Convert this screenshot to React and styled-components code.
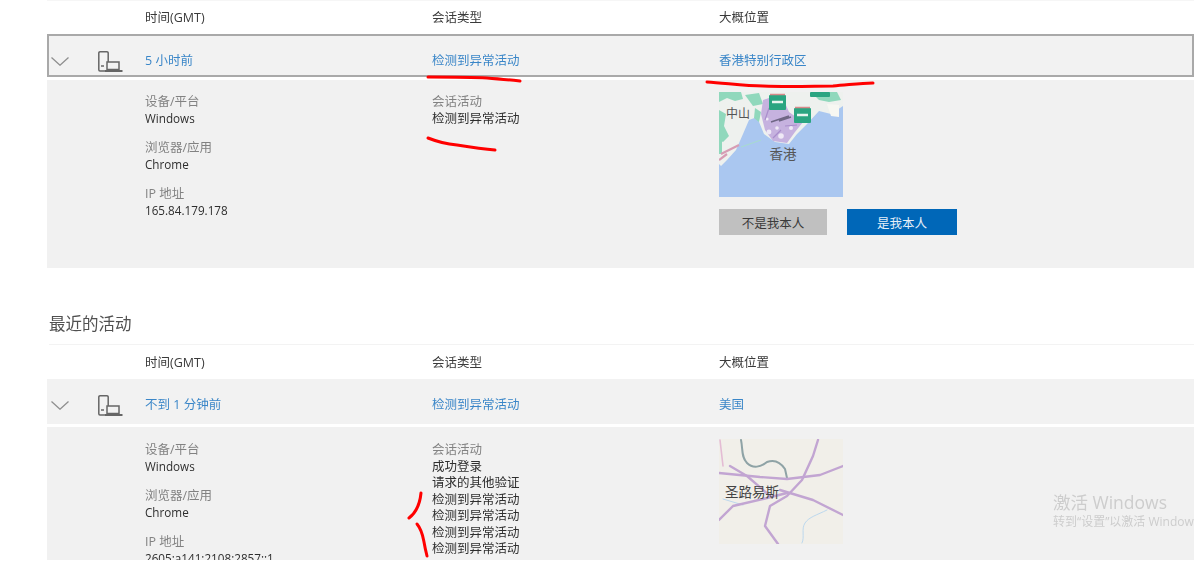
import React from "react";
import styled, { createGlobalStyle } from "styled-components";

const Global = createGlobalStyle`
  html, body { margin: 0; padding: 0; background: #fff; overflow: hidden; }
  body { font-family: "Open Sans", "Noto Sans CJK SC", sans-serif; font-size: 12.5px; color: #333; }
`;

const Page = styled.div`
  position: relative;
  width: 1194px;
  height: 566px;
  padding-left: 47px;
  box-sizing: border-box;
  overflow: hidden;
  filter: blur(0.75px);
`;
const columns = "98px 287px 287px 1fr";
const HeaderRow = styled.div`
  display: grid;
  grid-template-columns: ${columns};
  height: 34px;
  padding-bottom: 2px;
  align-items: center;
  box-sizing: border-box;
  border-top: ${(p) => (p.$plain ? "0" : "1px solid #f6f6f6")};
  color: #3a3a3a;
`;
const SessionRow = styled.div`
  display: grid;
  grid-template-columns: ${columns};
  height: ${(p) => (p.$selected ? 43 : 45)}px;
  padding-top: ${(p) => (p.$selected ? 18 : 17)}px;
  box-sizing: border-box;
  line-height: 18px;
  background: #f2f2f2;
  box-shadow: ${(p) => (p.$selected ? "inset 0 0 0 2px #a9a9a9" : "none")};
  margin-bottom: 3px;
`;
const IconCell = styled.div`
  display: flex;
  align-items: center;
  gap: 29px;
  padding-left: 4px;
  height: 18px;
`;
const LinkText = styled.div`
  color: #3a86c8;
`;
const Detail = styled.div`
  display: grid;
  grid-template-columns: ${columns};
  height: ${(p) => p.$height}px;
  padding-top: 12px;
  box-sizing: border-box;
  background: #f1f1f1;
  overflow: hidden;
`;
const TextColumn = styled.div`
  grid-column: ${(p) => p.$col};
  padding-top: ${(p) => p.$top}px;
  display: flex;
  flex-direction: column;
  gap: 13px;
`;
const Group = styled.div`
  line-height: 16.5px;
`;
const Label = styled.div`
  color: #828282;
`;
const Value = styled.div`
  color: #2e2e2e;
  font-size: ${(p) => (p.$latin ? "11.7px" : "12.5px")};
  margin: ${(p) => (p.$latin ? "-1px 0 1px" : "0")};
`;
const MapColumn = styled.div`
  grid-column: 4;
`;
const MapBox = styled.svg`
  display: block;
  width: 124px;
  height: 105px;
`;
const Buttons = styled.div`
  display: flex;
  gap: 20px;
  margin-top: 12px;
`;
const Button = styled.div`
  width: ${(p) => (p.$primary ? 110 : 108)}px;
  height: 26px;
  display: flex;
  align-items: center;
  justify-content: center;
  background: ${(p) => (p.$primary ? "#0067b8" : "#c0c0c0")};
  color: ${(p) => (p.$primary ? "#e6eff8" : "#3a3a3a")};
`;
const SectionTitle = styled.div`
  margin-top: 44px;
  margin-left: 2px;
  font-size: 16.5px;
  line-height: 24px;
  color: #505050;
`;
const Divider = styled.div`
  height: 1px;
  margin: 8px 0 0 2px;
  background: #f3f3f3;
`;
const Overlay = styled.svg`
  position: absolute;
  left: 0;
  top: 0;
  width: 1194px;
  height: 566px;
  pointer-events: none;
`;
const Watermark = styled.div`
  position: absolute;
  left: 1053px;
  top: 491px;
  white-space: nowrap;
  color: #cdcdcd;
`;
const WatermarkTitle = styled.div`
  font-size: 17.5px;
  line-height: 23px;
`;
const WatermarkText = styled.div`
  font-size: 12px;
  line-height: 16px;
`;

const Chevron = () => (
  <svg width="18" height="9" viewBox="0 0 18 9" fill="none">
    <path d="M0.5 0.5 L9 8.2 L17.5 0.5" stroke="#8f8f8f" strokeWidth="1.3" />
  </svg>
);
const DeviceIcon = () => (
  <svg width="25" height="21" viewBox="0 0 25 21" fill="none" stroke="#666" strokeWidth="1.5">
    <path d="M7 20 H2 a1.2 1.2 0 0 1 -1.2 -1.2 V2 a1.2 1.2 0 0 1 1.2 -1.2 H9 a1.2 1.2 0 0 1 1.2 1.2 V11" />
    <path d="M3 15 H6" />
    <rect x="9" y="11" width="12" height="7.5" />
    <path d="M7 20 H24.5" strokeWidth="2" />
  </svg>
);

const HongKongMap = () => (
  <MapBox viewBox="0 0 124 105">
    <rect width="124" height="105" fill="#aac7f0" />
    <path d="M0 0 H124 V14 L112 22 L100 19 L88 32 L78 42 L70 52 L56 50 L45 42 L38 25 L30 28 L24 42 L17 58 L8 68 L2 74 L0 72 Z" fill="#eef1ee" />
    <g fill="#90d8bc">
      <path d="M0 0 H22 L24 7 L16 9 L8 6 L0 10 Z" />
      <path d="M26 3 L40 1 L44 12 L34 14 Z" />
      <path d="M0 18 L7 22 L5 34 L10 44 L4 50 L0 48 Z" />
      <path d="M36 16 L42 20 L40 30 L35 26 Z" />
      <path d="M92 0 H118 L122 8 L110 10 L100 8 Z" />
      <path d="M0 46 H3 V62 H0 Z" />
    </g>
    <path d="M44 8 L62 2 L70 20 L84 30 L76 40 L68 51 L54 49 L46 38 L42 22 Z" fill="#c6b2df" />
    <g fill="#efe9f6">
      <circle cx="50" cy="40" r="2.4" />
      <circle cx="62" cy="44" r="2.8" />
      <circle cx="72" cy="36" r="2" />
      <circle cx="48" cy="27" r="1.6" />
      <circle cx="58" cy="36" r="1.8" />
    </g>
    <path d="M52 30 L70 24 M60 29 L72 25" stroke="#6f6685" strokeWidth="1.5" />
    <path d="M50 16 L46 28 M66 34 L78 33 M54 46 L62 38" stroke="#a98dcb" strokeWidth="1.2" />
    <path d="M2 62 L20 53 M0 68 L8 62" stroke="#d79cb4" strokeWidth="2.2" />
    <path d="M22 55 L42 48" stroke="#a7dccd" strokeWidth="1" />
    <path d="M108 12 L120 13 L120 25 L112 24 Z" fill="#f7f7f2" />
    <rect x="50" y="3" width="17" height="15" rx="1" fill="#2aa581" />
    <rect x="75" y="16" width="17" height="15" rx="1" fill="#2aa581" />
    <path d="M51 2.5 H66 M76 15.5 H91" stroke="#d88a8a" strokeWidth="1.3" />
    <path d="M53 10 H64 M78 23 H89" stroke="#e6f5ef" strokeWidth="2.4" />
    <rect x="91" y="0" width="20" height="5" rx="1" fill="#2aa581" />
    <text x="19" y="26" textAnchor="middle" fontSize="12" fill="#555" fontFamily="'Noto Sans CJK SC', sans-serif">中山</text>
    <text x="64" y="67" textAnchor="middle" fontSize="13.5" fill="#555" fontFamily="'Noto Sans CJK SC', sans-serif">香港</text>
  </MapBox>
);

const StLouisMap = () => (
  <MapBox viewBox="0 0 124 105">
    <rect width="124" height="105" fill="#f1efe9" />
    <g fill="none" strokeLinejoin="round" strokeLinecap="round">
      <path d="M22 1 C24 10 22 18 28 24 C34 30 42 28 48 23 C56 20 62 24 66 30 L68 39" stroke="#8fa3a6" strokeWidth="2" />
      <path d="M108 71 C98 76 90 78 86 84 C82 90 86 98 83 104 M4 60 L24 66" stroke="#bcd8ee" strokeWidth="1" />
      <path d="M1 1 L4 27" stroke="#e4bcd4" strokeWidth="1.6" />
      <g stroke="#c2a5d2" strokeWidth="2.4">
        <path d="M0 34 L41 38 L68 40 L101 36 L124 27" />
        <path d="M99 1 L94 17 L83 41 L68 57 L51 67 L46 87 L59 105" />
        <path d="M11 27 L28 37 L51 57" />
        <path d="M61 51 L94 61 L124 76" />
        <path d="M0 81 L14 67 L48 59 L68 54" />
      </g>
    </g>
    <text x="6" y="58" fontSize="13.5" fill="#444" fontFamily="'Noto Sans CJK SC', sans-serif">圣路易斯</text>
  </MapBox>
);

const Info = ({ label, value, latin }) => (
  <Group>
    <Label>{label}</Label>
    <Value $latin={latin}>{value}</Value>
  </Group>
);

const Header = () => (
  <>
    <span />
    <span>时间(GMT)</span>
    <span>会话类型</span>
    <span>大概位置</span>
  </>
);

const Row = ({ selected, time, location }) => (
  <SessionRow $selected={selected}>
    <IconCell>
      <Chevron />
      <DeviceIcon />
    </IconCell>
    <LinkText>{time}</LinkText>
    <LinkText>检测到异常活动</LinkText>
    <LinkText>{location}</LinkText>
  </SessionRow>
);

export default function App() {
  return (
    <>
      <Global />
      <Page>
        <HeaderRow><Header /></HeaderRow>
        <Row selected time="5 小时前" location="香港特别行政区" />
        <Detail $height={188}>
          <TextColumn $col={2} $top={2}>
            <Info label="设备/平台" value="Windows" latin />
            <Info label="浏览器/应用" value="Chrome" latin />
            <Info label="IP 地址" value="165.84.179.178" latin />
          </TextColumn>
          <TextColumn $col={3} $top={2}>
            <Info label="会话活动" value="检测到异常活动" />
          </TextColumn>
          <MapColumn>
            <HongKongMap />
            <Buttons>
              <Button>不是我本人</Button>
              <Button $primary>是我本人</Button>
            </Buttons>
          </MapColumn>
        </Detail>

        <SectionTitle>最近的活动</SectionTitle>
        <Divider />
        <HeaderRow $plain><Header /></HeaderRow>
        <Row time="不到 1 分钟前" location="美国" />
        <Detail $height={133}>
          <TextColumn $col={2} $top={3}>
            <Info label="设备/平台" value="Windows" latin />
            <Info label="浏览器/应用" value="Chrome" latin />
            <Info label="IP 地址" value="2605:a141:2108:2857::1" latin />
          </TextColumn>
          <TextColumn $col={3} $top={3}>
            <Group>
              <Label>会话活动</Label>
              <Value>成功登录</Value>
              <Value>请求的其他验证</Value>
              <Value>检测到异常活动</Value>
              <Value>检测到异常活动</Value>
              <Value>检测到异常活动</Value>
              <Value>检测到异常活动</Value>
            </Group>
          </TextColumn>
          <MapColumn>
            <StLouisMap />
          </MapColumn>
        </Detail>

        <Watermark>
          <WatermarkTitle>激活 Windows</WatermarkTitle>
          <WatermarkText>转到“设置”以激活 Windows。</WatermarkText>
        </Watermark>

        <Overlay viewBox="0 0 1194 566" fill="none" stroke="#ff0000" strokeWidth="3" strokeLinecap="round" strokeLinejoin="round">
          <path d="M428 77 C450 77 470 77 487 78 C500 79 510 80 520 81" />
          <path d="M428 138 C438 142 447 144 457 145 C470 147 484 149 495 150" />
          <path d="M707 82 C725 83 745 86 763 86 C790 87 815 86 833 86 C848 85 860 83 873 83" />
          <path d="M421 493 C420 503 417 512 409 518" />
          <path d="M417 524 C422 530 423 537 424 542 C425 548 426 552 427 556" />
        </Overlay>
      </Page>
    </>
  );
}
